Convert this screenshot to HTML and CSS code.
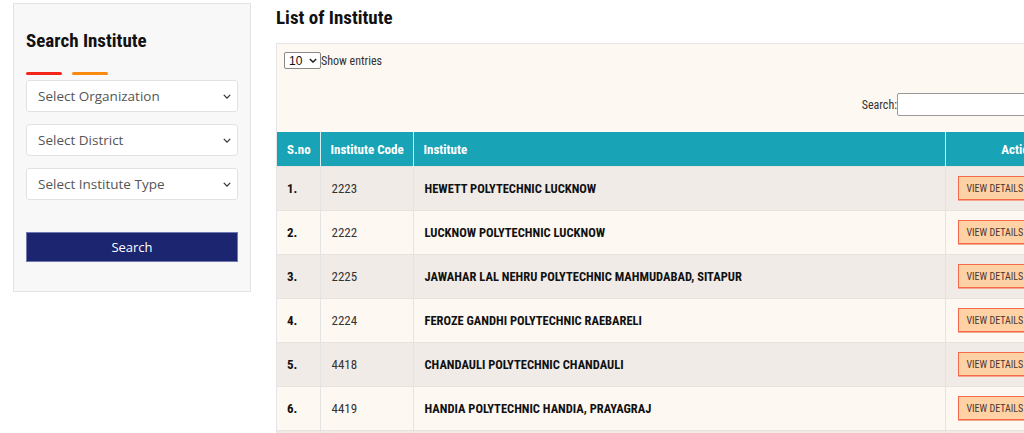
FILE: index.html
```html
<!DOCTYPE html>
<html>
<head>
<meta charset="utf-8">
<link rel="stylesheet" href="styles.css">
</head>
<body>
<div class="page">
  <aside class="panel">
    <h2 class="panel-title">Search Institute</h2>
    <div class="bars"><span class="bar red"></span><span class="bar orange"></span></div>
    <div class="field"><span>Select Organization</span><svg viewBox="0 0 10 6" class="chev"><path d="M1 1l4 4 4-4" fill="none" stroke="#333" stroke-width="1.6"/></svg></div>
    <div class="field"><span>Select District</span><svg viewBox="0 0 10 6" class="chev"><path d="M1 1l4 4 4-4" fill="none" stroke="#333" stroke-width="1.6"/></svg></div>
    <div class="field"><span>Select Institute Type</span><svg viewBox="0 0 10 6" class="chev"><path d="M1 1l4 4 4-4" fill="none" stroke="#333" stroke-width="1.6"/></svg></div>
    <button class="search-btn">Search</button>
  </aside>
  <main class="main">
    <h1 class="main-title">List of Institute</h1>
    <div class="box">
      <div class="len"><span class="len-sel">10<svg viewBox="0 0 10 6" class="chev2"><path d="M1 1l4 4 4-4" fill="none" stroke="#222" stroke-width="1.8"/></svg></span><span>Show entries</span></div>
      <div class="filter"><span>Search:</span><span class="filter-input"></span></div>
      <table class="tbl">
        <thead>
          <tr><th class="c1">S.no</th><th class="c2">Institute Code</th><th class="c3">Institute</th><th class="c4">Action</th></tr>
        </thead>
        <tbody>
          <tr><td class="num">1.</td><td class="code">2223</td><td class="name">HEWETT POLYTECHNIC LUCKNOW</td><td><span class="vd">VIEW DETAILS</span></td></tr>
          <tr><td class="num">2.</td><td class="code">2222</td><td class="name">LUCKNOW POLYTECHNIC LUCKNOW</td><td><span class="vd">VIEW DETAILS</span></td></tr>
          <tr><td class="num">3.</td><td class="code">2225</td><td class="name">JAWAHAR LAL NEHRU POLYTECHNIC MAHMUDABAD, SITAPUR</td><td><span class="vd">VIEW DETAILS</span></td></tr>
          <tr><td class="num">4.</td><td class="code">2224</td><td class="name">FEROZE GANDHI POLYTECHNIC RAEBARELI</td><td><span class="vd">VIEW DETAILS</span></td></tr>
          <tr><td class="num">5.</td><td class="code">4418</td><td class="name">CHANDAULI POLYTECHNIC CHANDAULI</td><td><span class="vd">VIEW DETAILS</span></td></tr>
          <tr><td class="num">6.</td><td class="code">4419</td><td class="name">HANDIA POLYTECHNIC HANDIA, PRAYAGRAJ</td><td><span class="vd">VIEW DETAILS</span></td></tr>
          <tr><td class="num"></td><td class="code"></td><td class="name"></td><td></td></tr>
        </tbody>
      </table>
    </div>
  </main>
</div>
</body>
</html>
```

FILE: styles.css
```css
html, body {
  margin: 0;
  padding: 0;
  background: #fff;
  overflow: hidden;
  height: 433px;
}
.page {
  display: flex;
  align-items: flex-start;
  gap: 25px;
  padding: 3px 0 0 13px;
  width: 1200px;
}
.panel {
  width: 212px;
  flex: none;
  background: #f8f8f8;
  border: 1px solid #e3e3e3;
  padding: 25px 12px 29px 12px;
}
.panel-title {
  margin: 0;
  font-family: "Roboto Condensed", "Liberation Sans Narrow", "DejaVu Sans Condensed", Roboto, sans-serif;
  font-weight: 700;
  font-size: 19px;
  line-height: 24px;
  color: #111;
}
.bars {
  display: flex;
  gap: 10px;
  margin-top: 19px;
  height: 3px;
}
.bar {
  width: 36px;
  height: 3px;
  border-radius: 2px;
}
.red { background: #f4261b; }
.orange { background: #fb8a0f; }
.field {
  margin-top: 5px;
  height: 30px;
  background: #fff;
  border: 1px solid #e2e2e2;
  border-radius: 3px;
  display: flex;
  align-items: center;
  justify-content: space-between;
  padding: 0 6px 0 11px;
  font-family: "Open Sans", "Noto Sans", sans-serif;
  font-size: 13.5px;
  color: #555;
}
.field + .field { margin-top: 12px; }
.chev { width: 8px; height: 5px; }
.search-btn {
  display: block;
  width: 100%;
  margin-top: 32px;
  height: 30px;
  background: #1b2570;
  border: 1px solid #6f78b0;
  color: #fff;
  font-family: "Open Sans", "Noto Sans", sans-serif;
  font-size: 13px;
  padding: 0;
}
.main {
  flex: none;
  width: 816px;
}
.main-title {
  margin: 3px 0 0 0;
  font-family: "Roboto Condensed", "Liberation Sans Narrow", "DejaVu Sans Condensed", Roboto, sans-serif;
  font-weight: 700;
  font-size: 19px;
  line-height: 24px;
  color: #111;
}
.box {
  margin-top: 13px;
  background: #fdf8f2;
  border: 1px solid #e5e5e5;
  font-family: "Roboto Condensed", "Liberation Sans Narrow", "DejaVu Sans Condensed", Roboto, sans-serif;
}
.len {
  display: flex;
  align-items: center;
  padding: 8px 0 0 7px;
  font-size: 12px;
  color: #333;
  height: 17px;
}
.len-sel {
  box-sizing: border-box;
  width: 37px;
  height: 17px;
  border: 1px solid #888;
  border-radius: 2px;
  background: #fff;
  display: flex;
  align-items: center;
  justify-content: space-between;
  padding: 0 3px 0 4px;
  font-family: Arial, "Liberation Sans", sans-serif;
  font-size: 12px;
  color: #111;
}
.chev2 { width: 8px; height: 5px; }
.filter {
  display: flex;
  justify-content: flex-end;
  align-items: center;
  margin-top: 24px;
  font-size: 12px;
  color: #333;
  height: 23px;
}
.filter-input {
  box-sizing: border-box;
  width: 194px;
  height: 23px;
  background: #fff;
  border: 1px solid #999;
  border-radius: 2px;
}
.tbl {
  margin-top: 16px;
  width: 100%;
  border-collapse: collapse;
  font-size: 13px;
}
.tbl th {
  background: #19a3b7;
  color: #fff;
  font-weight: 700;
  text-align: left;
  height: 34px;
  padding: 2px 0 0 10px;
  border-left: 1px solid #d8eef2;
  box-sizing: border-box;
}
.tbl th:first-child, .tbl td:first-child { border-left: none; }
.tbl th.c4 { text-align: center; padding-left: 0; }
.c1 { width: 43px; }
.c2 { width: 93px; }
.c3 { width: 532px; }
.tbl td {
  height: 44px;
  box-sizing: border-box;
  padding: 0 0 0 10px;
  border-left: 1px solid #e4e4e4;
  border-top: 1px solid #e8e3de;
  color: #111;
}
.tbl tbody tr:nth-child(odd) td { background: #f0ebe7; }
.tbl tbody tr:nth-child(even) td { background: #fdf8f2; }
.tbl td.num { font-weight: 700; }
.tbl td.code { color: #333; padding-left: 11px; }
.tbl td.name { font-weight: 700; padding-left: 11px; font-size: 12.5px; }
.tbl td:last-child { padding-left: 12px; }
.vd {
  display: inline-flex;
  align-items: center;
  height: 22px;
  padding: 0 8px;
  background: #fed2a5;
  border: 1px solid #f36a4a;
  color: #4a3535;
  font-size: 10px;
  box-shadow: 0 1px 0 #f7a58f;
}
```
